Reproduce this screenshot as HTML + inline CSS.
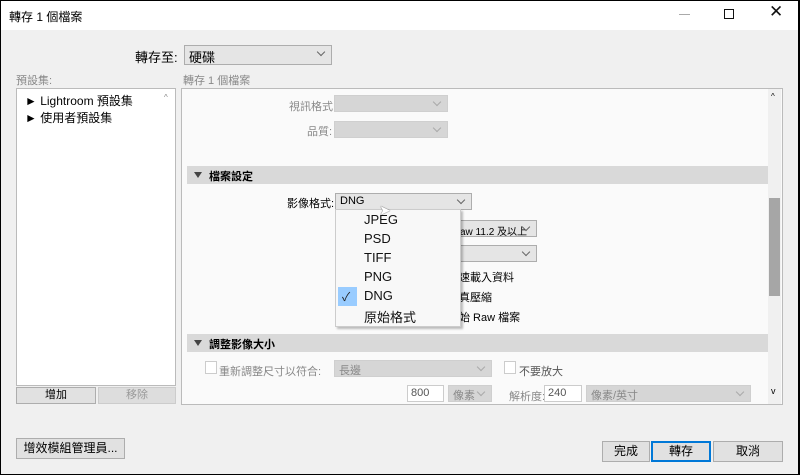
<!DOCTYPE html><html><head><meta charset="utf-8"><style>
*{box-sizing:border-box}
body{margin:0;width:800px;height:475px;overflow:hidden;background:#000;font-family:"Liberation Sans","Noto Sans CJK TC",sans-serif;font-size:12px;color:#000}
.win{position:absolute;left:1px;top:1px;width:797px;height:473px;background:#f0f0f0}
.tb{position:absolute;left:0;top:0;width:797px;height:29px;background:#fff}
.a{position:absolute;white-space:nowrap}
.sel{position:absolute;background:#e5e5e5;border:1px solid #adadad;font-size:11px;padding:1px 4px;height:17px;white-space:nowrap;overflow:hidden}
.sel:after{content:"";position:absolute;right:7px;top:3px;width:5px;height:5px;border-right:1px solid #666;border-bottom:1px solid #666;transform:rotate(45deg)}
.dis{background:#d6d6d6;border-color:#cfcfcf;color:#888}
.dis:after{border-color:#aaa}
.hdr{position:absolute;left:186px;width:581px;height:18px;background:#d9d9d9;font-weight:bold;font-size:11px;padding:2px 0 0 22px}
.hdr:before{content:"";position:absolute;left:7px;top:6px;border-left:4px solid transparent;border-right:4px solid transparent;border-top:6px solid #444}
.cb{position:absolute;width:12px;height:13px;background:#fff;border:1px solid #ccc}
.inp{position:absolute;background:#fff;border:1px solid #ccc;font-size:11px;padding:1px 3px;height:17px;color:#555}
.btn{position:absolute;background:#e1e1e1;border:1px solid #adadad;text-align:center;font-size:12px;line-height:19px}
.gl{color:#888;font-size:11px}
.mi{position:absolute;left:363px;font-size:13px;color:#111}
</style></head><body><div class="win">
<div class="tb"><div class="a" style="left:8px;top:7px;font-size:12px">轉存 1 個檔案</div>
<div class="a" style="left:678px;top:13px;width:11px;height:1px;background:#aaa"></div>
<div class="a" style="left:723px;top:8px;width:10px;height:10px;border:1px solid #111"></div>
<div class="a" style="left:768px;top:1px;font-size:17px;color:#111">✕</div></div>
<div class="a" style="left:134px;top:46px;font-size:13px">轉存至:</div>
<div class="sel" style="left:183px;top:44px;width:148px;height:20px;font-size:13px">硬碟</div>
<div class="a gl" style="left:15px;top:71px">預設集:</div>
<div class="a gl" style="left:182px;top:71px">轉存 1 個檔案</div>
<div class="a" style="left:15px;top:87px;width:160px;height:298px;background:#fff;border:1px solid #bbb"></div>
<div class="a" style="left:24px;top:91px;font-size:12px">► Lightroom 預設集</div>
<div class="a" style="left:24px;top:108px;font-size:12px">► 使用者預設集</div>
<div class="a" style="left:163px;top:92px;font-size:8px;color:#888">^</div>
<div class="btn" style="left:15px;top:386px;width:80px;height:17px;line-height:15px;font-size:11px">增加</div>
<div class="btn" style="left:97px;top:386px;width:78px;height:17px;line-height:15px;font-size:11px;color:#999;background:#ddd;border-color:#ccc">移除</div>
<div class="a" style="left:180px;top:87px;width:602px;height:317px;background:#fafafa;border:1px solid #bbb"></div>
<div class="a" style="left:767px;top:88px;width:13px;height:315px;background:#f0f0f0"></div>
<div class="a" style="left:768px;top:197px;width:11px;height:98px;background:#a6a6a6"></div>
<div class="a" style="left:770px;top:91px;font-size:8px">^</div>
<div class="a" style="left:770px;top:385px;font-size:9px">v</div>
<div class="a gl" style="left:288px;top:97px">視訊格式:</div>
<div class="sel dis" style="left:333px;top:94px;width:114px">&nbsp;</div>
<div class="a gl" style="left:306px;top:122px">品質:</div>
<div class="sel dis" style="left:333px;top:120px;width:114px">&nbsp;</div>
<div class="hdr" style="top:165px">檔案設定</div>
<div class="a" style="left:286px;top:194px;font-size:11px">影像格式:</div>
<div class="sel" style="left:334px;top:192px;width:137px">DNG</div>
<div class="sel" style="left:455px;top:219px;width:81px;font-size:10px;padding:2px 3px">aw 11.2 及以上</div>
<div class="sel" style="left:455px;top:244px;width:81px">&nbsp;</div>
<div class="a" style="left:458px;top:268px;font-size:11px">速載入資料</div>
<div class="a" style="left:458px;top:288px;font-size:11px">真壓縮</div>
<div class="a" style="left:458px;top:308px;font-size:11px">始 Raw 檔案</div>
<div class="a" style="left:334px;top:208px;width:126px;height:118px;background:#f8f8f8;border:1px solid #ccc;box-shadow:2px 2px 2px rgba(0,0,0,.25)"></div>
<div class="a" style="left:337px;top:286px;width:19px;height:19px;background:#99ccff"></div>
<div class="a" style="left:341px;top:287px;font-size:12px;color:#222">✓</div>
<div class="mi" style="top:211px">JPEG</div>
<div class="mi" style="top:230px">PSD</div>
<div class="mi" style="top:249px">TIFF</div>
<div class="mi" style="top:268px">PNG</div>
<div class="mi" style="top:287px">DNG</div>
<div class="mi" style="top:306px">原始格式</div>
<div class="a" style="left:378px;top:201px;font-size:14px;color:#fff;text-shadow:0 0 1px #000">➤</div>
<div class="hdr" style="top:333px">調整影像大小</div>
<div class="cb" style="left:204px;top:360px"></div>
<div class="a gl" style="left:218px;top:362px">重新調整尺寸以符合:</div>
<div class="sel dis" style="left:333px;top:359px;width:158px">長邊</div>
<div class="cb" style="left:503px;top:360px"></div>
<div class="a gl" style="left:518px;top:362px;color:#555">不要放大</div>
<div class="inp" style="left:406px;top:384px;width:37px">800</div>
<div class="sel dis" style="left:447px;top:384px;width:44px">像素</div>
<div class="a gl" style="left:508px;top:387px">解析度:</div>
<div class="inp" style="left:543px;top:384px;width:38px">240</div>
<div class="sel dis" style="left:585px;top:384px;width:165px">像素/英寸</div>
<div class="btn" style="left:15px;top:437px;width:109px;height:21px">增效模組管理員...</div>
<div class="btn" style="left:601px;top:440px;width:48px;height:21px">完成</div>
<div class="btn" style="left:650px;top:440px;width:60px;height:21px;border:2px solid #0078d7;line-height:17px">轉存</div>
<div class="btn" style="left:712px;top:440px;width:70px;height:21px">取消</div>
</div></body></html>
